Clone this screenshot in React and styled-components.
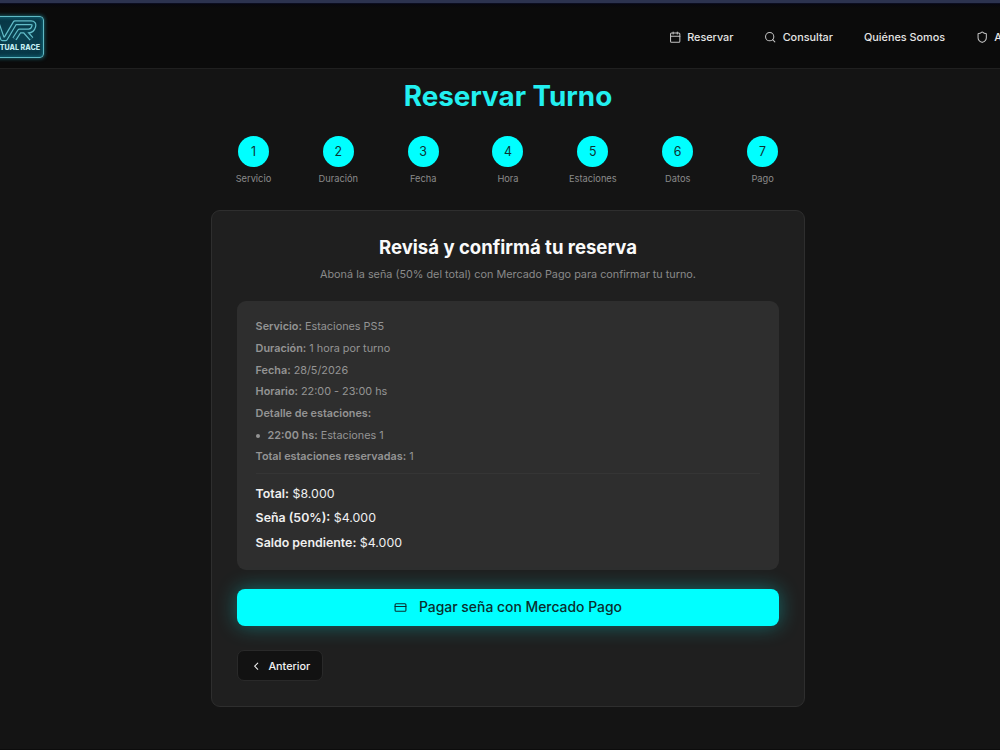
import React from "react";
import styled, { createGlobalStyle } from "styled-components";
import { Calendar, Search, Shield, CreditCard, ChevronLeft } from "lucide-react";

const Global = createGlobalStyle`
  *, *::before, *::after { box-sizing: border-box; }
  html, body { margin: 0; padding: 0; background: #141414; }
  body { font-family: Inter, "Liberation Sans", sans-serif; color: #f2f2f2; }
  h1, h2, p, ul { margin: 0; padding: 0; }
`;

const Page = styled.div`
  width: 1000px;
  height: 750px;
  overflow: hidden;
  background: #141414;
  border-bottom: 1px solid #0c0c0c;
`;

const WindowEdge = styled.div`
  height: 4px;
  background: linear-gradient(#2c334f 0 3px, #0c0e20 3px);
`;

const Header = styled.header`
  display: flex;
  align-items: center;
  height: 65px;
  padding-top: 2px;
  background: linear-gradient(#07070f, #0b0b0b 4px);
  border-bottom: 1px solid #202020;
`;

const Logo = styled.div`
  display: flex;
  flex-direction: column;
  align-items: flex-end;
  flex: none;
  width: 64px;
  height: 42px;
  margin-left: -20px;
  margin-top: -1px;
  padding: 1px 3px 0 0;
  border: 1.5px solid #5fb9c4;
  border-radius: 4px;
  background: radial-gradient(ellipse at 60% 50%, #0a4353, #06303e);
  box-shadow: 0 0 4px #1c7d8c, inset 0 0 4px #16788a;

  svg { display: block; flex: none; }
`;

const LogoText = styled.span`
  font-size: 7.1px;
  line-height: 9px;
  font-weight: 800;
  white-space: nowrap;
  color: #c4edf1;
`;

const Nav = styled.nav`
  display: flex;
  align-items: center;
  flex: none;
  gap: 31px;
  margin-left: 625px;
  padding-top: 1px;
`;

const NavItem = styled.a`
  display: flex;
  align-items: center;
  flex: none;
  gap: 5.8px;
  font-size: 10.83px;
  line-height: 17px;
  font-weight: 500;
  white-space: nowrap;
  color: #e6e6e6;

  svg { color: #c4c4c4; }
`;

const Main = styled.main`
  width: 594px;
  margin: 0 0 0 211px;
  padding-top: 11px;
`;

const Title = styled.h1`
  font-size: 27.8px;
  line-height: 32px;
  font-weight: 700;
  text-align: center;
  color: #22f0f0;
`;

const Steps = styled.div`
  display: grid;
  grid-template-columns: repeat(7, 1fr);
  margin-top: 24px;
`;

const Step = styled.div`
  display: flex;
  flex-direction: column;
  align-items: center;
  gap: 6px;
`;

const StepCircle = styled.div`
  display: grid;
  place-items: center;
  width: 31px;
  height: 31px;
  border-radius: 50%;
  background: #00ffff;
  color: #0d3333;
  font-size: 12.4px;
`;

const StepLabel = styled.span`
  font-size: 9.28px;
  line-height: 12px;
  color: #8a8a8a;
`;

const Card = styled.section`
  height: 497px;
  margin-top: 25px;
  padding: 24px 25px;
  border: 1px solid #2e2e2e;
  border-radius: 9px;
  background: #1f1f1f;
`;

const CardTitle = styled.h2`
  font-size: 18.56px;
  line-height: 25px;
  font-weight: 700;
  text-align: center;
  color: #fafafa;
`;

const CardSubtitle = styled.p`
  margin-top: 7px;
  font-size: 10.83px;
  line-height: 16px;
  text-align: center;
  color: #8a8a8a;
`;

const Summary = styled.div`
  height: 269px;
  margin-top: 18px;
  padding: 15.4px 18.6px;
  border-radius: 9px;
  background: #2e2e2e;
`;

const Row = styled.p`
  font-size: 10.83px;
  line-height: 21.66px;
  color: #949494;

  strong { font-weight: 600; }
`;

const BulletRow = styled(Row)`
  display: flex;
  align-items: center;
  gap: 8px;

  &::before {
    content: "";
    width: 4px;
    height: 4px;
    border-radius: 50%;
    background: #949494;
  }
`;

const Totals = styled.div`
  margin-top: 5px;
  padding-top: 7.6px;
  border-top: 1px solid #353535;
`;

const TotalRow = styled.p`
  font-size: 12.38px;
  line-height: 24.75px;
  color: #f0f0f0;

  strong { font-weight: 600; }
`;

const PayButton = styled.button`
  display: flex;
  align-items: center;
  justify-content: center;
  gap: 12px;
  width: 100%;
  height: 37px;
  margin-top: 18.6px;
  padding-bottom: 2px;
  border: 0;
  border-radius: 8px;
  background: #00ffff;
  box-shadow: 0 0 20px rgba(0, 255, 255, 0.34);
  font: 500 13.92px Inter, sans-serif;
  color: #0b2e2e;

  svg { margin-top: 1px; }
`;

const BackButton = styled.button`
  display: flex;
  align-items: center;
  gap: 6.4px;
  width: 86px;
  height: 31px;
  margin-top: 24.6px;
  padding: 1px 0 0 11.6px;
  border: 1px solid #292929;
  border-radius: 7px;
  background: #121212;
  font: 500 10.83px Inter, sans-serif;
  color: #f2f2f2;
`;

const steps = ["Servicio", "Duración", "Fecha", "Hora", "Estaciones", "Datos", "Pago"];

const vrLine =
  "M-4 22L2 39.3H5L14.5 23.3H30.5Q34.2 23.3 33.2 27Q32 31.5 28 31.5H19L14 39.3M24.5 32L31 39.3";

const VrMark = () => (
  <svg width="46" height="25" viewBox="-6.5 18.5 46 25" fill="none">
    <path d={vrLine} stroke="#62bcc8" strokeWidth="5" strokeLinejoin="round" />
    <path d={vrLine} stroke="#0a4555" strokeWidth="2.6" strokeLinejoin="round" />
  </svg>
);

export default function App() {
  return (
    <Page>
      <Global />
      <WindowEdge />
      <Header>
        <Logo>
          <VrMark />
          <LogoText>VIRTUAL RACE</LogoText>
        </Logo>
        <Nav>
          <NavItem><Calendar size={12.4} />Reservar</NavItem>
          <NavItem><Search size={12.4} />Consultar</NavItem>
          <NavItem>Quiénes Somos</NavItem>
          <NavItem><Shield size={12.4} />Admin</NavItem>
        </Nav>
      </Header>
      <Main>
        <Title>Reservar Turno</Title>
        <Steps>
          {steps.map((label, i) => (
            <Step key={label}>
              <StepCircle>{i + 1}</StepCircle>
              <StepLabel>{label}</StepLabel>
            </Step>
          ))}
        </Steps>
        <Card>
          <CardTitle>Revisá y confirmá tu reserva</CardTitle>
          <CardSubtitle>Aboná la seña (50% del total) con Mercado Pago para confirmar tu turno.</CardSubtitle>
          <Summary>
            <Row><strong>Servicio:</strong> Estaciones PS5</Row>
            <Row><strong>Duración:</strong> 1 hora por turno</Row>
            <Row><strong>Fecha:</strong> 28/5/2026</Row>
            <Row><strong>Horario:</strong> 22:00 - 23:00 hs</Row>
            <Row><strong>Detalle de estaciones:</strong></Row>
            <BulletRow><span><strong>22:00 hs:</strong> Estaciones 1</span></BulletRow>
            <Row><strong>Total estaciones reservadas:</strong> 1</Row>
            <Totals>
              <TotalRow><strong>Total:</strong> $8.000</TotalRow>
              <TotalRow><strong>Seña (50%):</strong> $4.000</TotalRow>
              <TotalRow><strong>Saldo pendiente:</strong> $4.000</TotalRow>
            </Totals>
          </Summary>
          <PayButton><CreditCard size={13} />Pagar seña con Mercado Pago</PayButton>
          <BackButton><ChevronLeft size={12.4} />Anterior</BackButton>
        </Card>
      </Main>
    </Page>
  );
}
